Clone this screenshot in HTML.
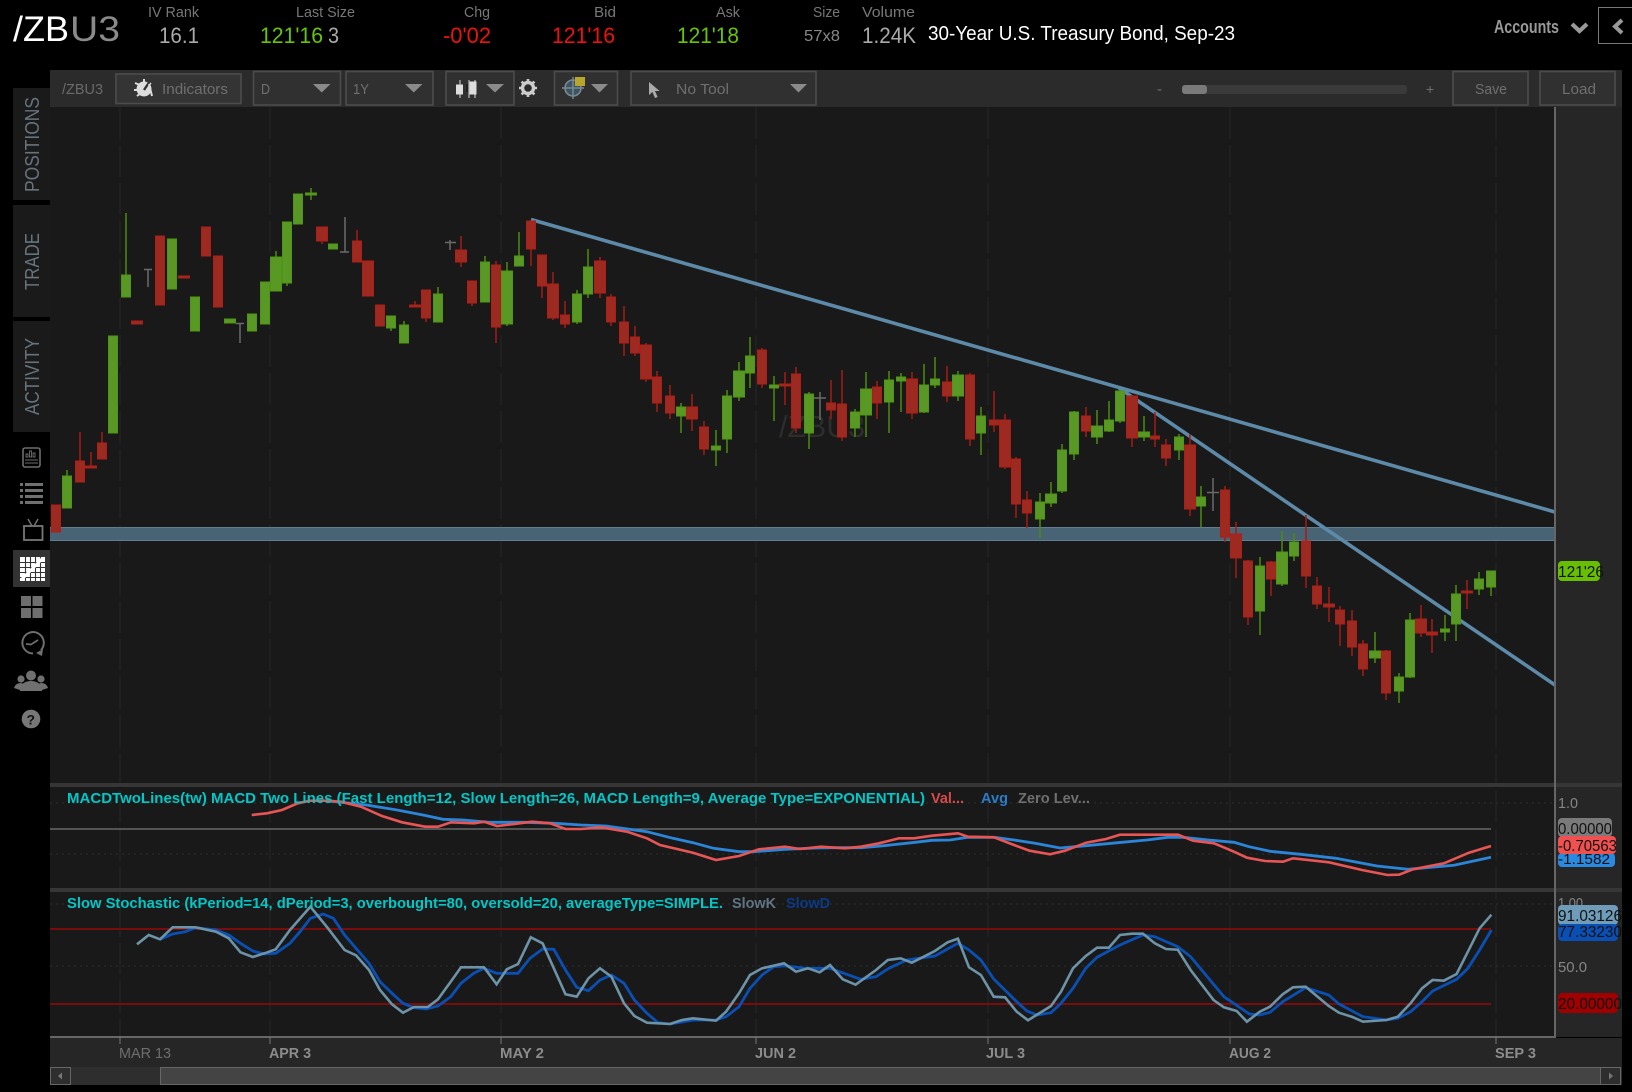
<!DOCTYPE html>
<html><head><meta charset="utf-8"><title>/ZBU3</title>
<style>html,body{margin:0;padding:0;background:#000;width:1632px;height:1092px;overflow:hidden}svg{display:block}text{font-family:"Liberation Sans",sans-serif}</style></head>
<body>
<svg width="1632" height="1092" viewBox="0 0 1632 1092" xmlns="http://www.w3.org/2000/svg">
<rect width="1632" height="1092" fill="#000"/>
<!-- header -->
<text x="13" y="41" font-size="35" fill="#fff" textLength="56" lengthAdjust="spacingAndGlyphs">/ZB</text>
<text x="70" y="41" font-size="35" fill="#8a8a8a" textLength="50" lengthAdjust="spacingAndGlyphs">U3</text>
<g font-size="15" fill="#777">
<text x="148" y="17" textLength="51" lengthAdjust="spacingAndGlyphs">IV Rank</text>
<text x="296" y="17" textLength="59" lengthAdjust="spacingAndGlyphs">Last Size</text>
<text x="464" y="17" textLength="26" lengthAdjust="spacingAndGlyphs">Chg</text>
<text x="594" y="17" textLength="22" lengthAdjust="spacingAndGlyphs">Bid</text>
<text x="716" y="17" textLength="24" lengthAdjust="spacingAndGlyphs">Ask</text>
<text x="813" y="17" textLength="27" lengthAdjust="spacingAndGlyphs">Size</text>
<text x="862" y="17" textLength="53" lengthAdjust="spacingAndGlyphs">Volume</text>
</g>
<g font-size="22">
<text x="159" y="43" fill="#aaa" textLength="40" lengthAdjust="spacingAndGlyphs">16.1</text>
<text x="260" y="43" fill="#68c400" textLength="63" lengthAdjust="spacingAndGlyphs">121'16</text>
<text x="328" y="43" fill="#aaa" textLength="11" lengthAdjust="spacingAndGlyphs">3</text>
<text x="443" y="43" fill="#f01010" textLength="48" lengthAdjust="spacingAndGlyphs">-0'02</text>
<text x="552" y="43" fill="#f01010" textLength="63" lengthAdjust="spacingAndGlyphs">121'16</text>
<text x="677" y="43" fill="#68c400" textLength="62" lengthAdjust="spacingAndGlyphs">121'18</text>
<text x="862" y="43" fill="#aaa" textLength="54" lengthAdjust="spacingAndGlyphs">1.24K</text>
</g>
<text x="804" y="41" font-size="16" fill="#888" textLength="36" lengthAdjust="spacingAndGlyphs">57x8</text>
<text x="928" y="40" font-size="20" fill="#fff" textLength="307" lengthAdjust="spacingAndGlyphs">30-Year U.S. Treasury Bond, Sep-23</text>
<text x="1494" y="33" font-size="18" font-weight="bold" fill="#999" textLength="65" lengthAdjust="spacingAndGlyphs">Accounts</text>
<path d="M1572 24L1579.5 31L1587 24" fill="none" stroke="#999" stroke-width="4.200"/>
<rect x="1598.5" y="7.5" width="40" height="36" fill="#000" stroke="#777"/>
<path d="M1622 20L1615 26.5L1622 33" fill="none" stroke="#999" stroke-width="4"/>

<!-- toolbar -->
<rect x="50" y="70" width="1572" height="37" fill="#2b2b2b"/>
<text x="62" y="94" font-size="15" fill="#6a6a6a" textLength="41" lengthAdjust="spacingAndGlyphs">/ZBU3</text>
<g fill="#303030" stroke="#4c4c4c" stroke-width="1.6">
<rect x="116" y="74" width="125" height="29.5" fill="#343434"/>
<rect x="253.5" y="71.5" width="87" height="33.5"/>
<rect x="346" y="71.5" width="87" height="33.5"/>
<rect x="446" y="71.5" width="68" height="33.5"/>
<rect x="554.5" y="71.5" width="63" height="33.5"/>
<rect x="631" y="71.5" width="185" height="33.5"/>
<rect x="1453" y="71.5" width="75" height="33.5"/>
<rect x="1540" y="71.5" width="75" height="33.5"/>
</g>
<g font-size="15" fill="#6f6f6f">
<text x="162" y="94" textLength="66" lengthAdjust="spacingAndGlyphs">Indicators</text>
<text x="261" y="94" textLength="9" lengthAdjust="spacingAndGlyphs">D</text>
<text x="353" y="94" textLength="16" lengthAdjust="spacingAndGlyphs">1Y</text>
<text x="676" y="94" textLength="53" lengthAdjust="spacingAndGlyphs">No Tool</text>
<text x="1475" y="94" textLength="32" lengthAdjust="spacingAndGlyphs">Save</text>
<text x="1562" y="94" textLength="34" lengthAdjust="spacingAndGlyphs">Load</text>
<text x="1157" y="94">-</text>
<text x="1426" y="94" font-size="14">+</text>
</g>
<g fill="#8a8a8a">
<path d="M313 84h17.5l-8.75 8.5z"/><path d="M405 84h17.5l-8.75 8.5z"/><path d="M486 84h18l-9 8.5z"/><path d="M591 84h17l-8.5 8.5z"/><path d="M790 84h17l-8.5 8.5z"/>
</g>
<rect x="1182" y="85" width="225" height="9" rx="3" fill="#3a3a3a"/>
<rect x="1182" y="85" width="25" height="9" rx="3" fill="#7a7a7a"/>
<!-- indicators icon -->
<circle cx="144" cy="89" r="7.5" fill="#ddd"/>
<path d="M135 83l5 2M137 96l4-3M144 79v4M151 83l-4 3M134 90h5" stroke="#ddd" stroke-width="2"/>
<path d="M144 90L150 81" stroke="#333" stroke-width="2.4"/>
<path d="M149 84l3 12" stroke="#ddd" stroke-width="2"/>
<!-- candle style icon -->
<path d="M460 80v18M469 80v18M475 80v18" stroke="#aaa" stroke-width="1.4"/>
<rect x="456" y="84.5" width="7" height="10" fill="#ddd"/><rect x="466" y="84" width="2" height="8" fill="#222"/>
<rect x="469.5" y="81.5" width="7" height="13" fill="#ddd"/>
<!-- gear -->
<circle cx="528" cy="88" r="5.5" fill="none" stroke="#ccc" stroke-width="3.4"/>
<path d="M528 79v3M528 94v3M519 88h3M534 88h3M521.6 81.6l2.2 2.2M532.2 92.2l2.2 2.2M534.4 81.6l-2.2 2.2M523.8 92.2l-2.2 2.2" stroke="#ccc" stroke-width="2.6"/>
<!-- pattern icon -->
<circle cx="573" cy="88" r="8" fill="#3d5562" stroke="#7a8a92" stroke-width="1.6"/>
<path d="M562 88h22M573 77v22" stroke="#7a8a92" stroke-width="1.4"/>
<rect x="575" y="77" width="10" height="9" fill="#b8a52a"/>
<!-- cursor -->
<path d="M649 82l0 13 3.4-3 2.6 6 2.6-1-2.6-6 4.6 0z" fill="#aaa"/>

<!-- sidebar tabs -->
<rect x="13" y="88" width="37" height="112" fill="#1a1a1a"/>
<rect x="13" y="205" width="37" height="112" fill="#1a1a1a"/>
<rect x="13" y="321" width="37" height="111" fill="#1a1a1a"/>
<g font-size="20" fill="#66727c">
<text transform="translate(39,192) rotate(-90)" textLength="95" lengthAdjust="spacingAndGlyphs">POSITIONS</text>
<text transform="translate(39,290) rotate(-90)" textLength="57" lengthAdjust="spacingAndGlyphs">TRADE</text>
<text transform="translate(39,415) rotate(-90)" textLength="77" lengthAdjust="spacingAndGlyphs">ACTIVITY</text>
</g>
<!-- sidebar icons -->
<rect x="23" y="448" width="17" height="19" rx="2" fill="none" stroke="#6d6d6d" stroke-width="1.6"/>
<path d="M26 457v-3h2v3zM29.5 457v-6h2v6zM33 457v-4h2v4z" fill="none" stroke="#6d6d6d" stroke-width=".9"/>
<path d="M25 460h13M25 463h13" stroke="#6d6d6d" stroke-width="1.1"/>
<path d="M25 484.5h18M25 490.5h18M25 496.5h18M25 502.5h18" stroke="#707070" stroke-width="3"/>
<path d="M20 484.5h3M20 490.5h3M20 496.5h3M20 502.5h3" stroke="#707070" stroke-width="3"/>
<rect x="24" y="526" width="18.5" height="14" fill="none" stroke="#777" stroke-width="1.8"/>
<path d="M32 526L28 519M34 526L38 519" stroke="#777" stroke-width="1.4"/>
<rect x="13" y="550" width="37" height="37" fill="#333"/>
<rect x="20" y="557" width="25" height="24" fill="#fff"/>
<path d="M25.500 557v24M30.500 557v24M35.500 557v24M40.500 557v24M20 562.500h25M20 567.500h25M20 572.500h25M20 577.500h25" stroke="#333" stroke-width="1.1"/>
<path d="M22 579L42 559" stroke="#fff" stroke-width="3"/>
<circle cx="42.500" cy="559" r="2" fill="#fff"/>
<g fill="#6e6e6e"><rect x="21" y="596" width="10" height="10"/><rect x="32.500" y="596" width="10" height="10"/><rect x="21" y="608" width="10" height="10"/><rect x="32.500" y="608" width="10" height="10"/></g>
<path d="M41 650A10.700 10.700 0 1 0 33 653.500" fill="none" stroke="#6e6e6e" stroke-width="2"/>
<path d="M36 653l7-4 -1 7z" fill="#6e6e6e"/>
<path d="M38 640L31 644.500L26 644" fill="none" stroke="#6e6e6e" stroke-width="1.7"/>
<g fill="#707070">
<circle cx="31" cy="675.500" r="5"/><path d="M20 691c0-7 5-10 11-10s11 3 11 10z"/>
<circle cx="21" cy="679" r="3.600"/><path d="M14 688c1-3 3-5 7-5l3 1-4 6z"/>
<circle cx="41" cy="679" r="3.600"/><path d="M48 688c-1-3-3-5-7-5l-3 1 4 6z"/>
</g>
<circle cx="31" cy="719" r="9.300" fill="#777"/>
<text x="26.500" y="724.500" font-size="14" font-weight="bold" fill="#111">?</text>

<!-- chart background -->
<rect x="50" y="107" width="1505" height="930" fill="#191919"/>
<rect x="1556" y="107" width="66" height="930" fill="#262626"/>
<rect x="50" y="1038" width="1572" height="29" fill="#262626"/>
<!-- grid -->
<path d="M120 107V1037M270 107V1037M501 107V1037M756 107V1037M988 107V1037M1230 107V1037M1496 107V1037" stroke="#262626" stroke-width="1.200" stroke-dasharray="32 6"/>
<path d="M50 803H1555M50 854H1555M50 904H1555M50 966H1555" stroke="#2e2e2e" stroke-width="1" stroke-dasharray="2 4"/>
<!-- watermark -->
<text x="779" y="437" font-size="31" fill="#2d2d2d" textLength="86" lengthAdjust="spacingAndGlyphs">/ZBU3</text>
<!-- horizontal band -->
<rect x="50" y="527" width="1505" height="14" fill="#486374"/>
<path d="M50 527.500H1555M50 540.500H1555" stroke="#5f7d90" stroke-width="1"/>
<!-- trend lines -->
<path d="M531 219.500L1555 512M1119 388L1555 685" fill="none" stroke="#5c8aa8" stroke-width="3.600"/>
<!-- gray doji -->
<path d="M144 269.500h8M148 269.500V287M236 323.500h8M240 323.500V343M340 252h9M345 217V252M445 242.500h11M450 240V250M814 398h12M820 392V420M1207 492.500h12M1213 478V511" fill="none" stroke="#6a6a6a" stroke-width="1.500"/>
<!-- green wicks -->
<path fill="none" stroke="#4a8c10" stroke-width="1.500" d="M67 470V476M126 213V275M276 251V257M287 283V286M311 188V200M391 328V331M404 321V325M438 287V294M485 256V262M507 262V326M519 232V256M577 290V324M588 249V298M681 403V433M716 430V466M727 390V453M739 362V401M750 337V388M774 376V421M809 392V449M855 409V437M866 372V437M889 371V433M901 373V412M924 364V413M935 357V388M958 371V401M981 407V455M1040 493V538M1051 482V507M1062 444V493M1074 411V460M1097 410V444M1109 401V432M1120 390V423M1144 416V441M1179 434V460M1201 486V527M1260 557V635M1282 531V586M1294 533V561M1375 632V663M1399 673V703M1410 613V678M1445 615V641M1456 585V641M1479 572V595M1491 571V596"/>
<!-- red wicks -->
<path fill="none" stroke="#a51a14" stroke-width="1.500" d="M80 432V461M91 452V466M102 432V443M322 241V244M357 230V241M415 301V305M426 318V322M461 236V267M472 303V306M496 261V343M531 249V266M542 286V298M553 272V320M565 301V328M600 257V298M611 294V326M624 306V356M635 326V356M646 343V382M657 371V412M670 385V419M692 394V431M704 421V455M762 348V388M785 372V405M796 367V433M831 380V419M842 370V441M877 381V419M912 372V419M947 366V402M970 373V446M994 391V432M1005 414V469M1016 457V518M1027 491V528M1086 407V437M1132 395V447M1155 412V447M1166 439V466M1190 434V516M1225 486V542M1236 522V578M1248 560V625M1271 561V596M1306 515V588M1317 577V609M1329 587V622M1340 606V646M1352 610V656M1363 640V676M1386 650V700M1421 605V637M1432 619V653M1467 580V609"/>
<!-- green bodies -->
<path fill="#5a9826" stroke="#4f9614" stroke-width="1" d="M62.500 476h9V508h-9zM108.500 336h9V433h-9zM121.500 275h9V297h-9zM167.500 239h9V289h-9zM190.500 297h9V331h-9zM247.500 314h9V331h-9zM260.500 282h9V324h-9zM282.500 222h9V283h-9zM293.500 194h9V224h-9zM305.500 193h11V195h-11zM328.500 244h9V249h-9zM386.500 316h9V328h-9zM399.500 325h9V343h-9zM433.500 294h9V322h-9zM480.500 262h9V302h-9zM514.500 256h9V266h-9zM572.500 294h9V322h-9zM583.500 267h9V294h-9zM676.500 407h9V416h-9zM711.500 446h9V450h-9zM722.500 396h9V439h-9zM745.500 356h9V373h-9zM769.500 385h9V388h-9zM804.500 394h9V433h-9zM850.500 412h9V428h-9zM884.500 380h9V402h-9zM896.500 377h9V381h-9zM919.500 385h9V412h-9zM930.500 379h9V385h-9zM976.500 416h9V433h-9zM1035.500 502h9V519h-9zM1057.500 450h9V491h-9zM1069.500 412h9V454h-9zM1104.500 420h9V431h-9zM1115.500 391h9V421h-9zM1174.500 437h9V450h-9zM1196.500 497h9V506h-9zM1255.500 566h9V611h-9zM1289.500 542h9V556h-9zM1394.500 677h9V691h-9zM1405.500 620h9V677h-9zM1440.500 629h9V632h-9zM1451.500 594h9V624h-9zM1474.500 579h9V589h-9zM1486.500 571h9V587h-9zM224.500 319h11V323h-11zM270.500 257h11V291h-11zM501.500 271h11V324h-11zM733.500 371h11V397h-11zM860.500 389h11V415h-11zM952.500 375h11V396h-11zM1045.500 494h11V503h-11zM1091.500 426h11V437h-11zM1138.500 432h11V437h-11zM1276.500 552h11V584h-11zM1369.500 651h11V658h-11z"/>
<!-- red bodies -->
<path fill="#9c2a20" stroke="#ae1e16" stroke-width="1" d="M51.500 505h9V532h-9zM75.500 461h9V482h-9zM97.500 443h9V459h-9zM155.500 236h9V305h-9zM201.500 227h9V256h-9zM213.500 256h9V307h-9zM352.500 241h9V262h-9zM375.500 305h9V326h-9zM421.500 290h9V318h-9zM467.500 281h9V303h-9zM491.500 265h9V327h-9zM526.500 221h9V249h-9zM537.500 255h9V286h-9zM560.500 315h9V324h-9zM606.500 297h9V322h-9zM619.500 322h9V343h-9zM630.500 337h9V353h-9zM652.500 377h9V403h-9zM665.500 396h9V413h-9zM699.500 427h9V449h-9zM757.500 350h9V384h-9zM791.500 374h9V428h-9zM826.500 403h9V410h-9zM837.500 404h9V437h-9zM872.500 387h9V403h-9zM942.500 382h9V396h-9zM965.500 375h9V439h-9zM989.500 420h9V425h-9zM1011.500 459h9V504h-9zM1022.500 500h9V513h-9zM1081.500 416h9V431h-9zM1150.500 436h9V439h-9zM1161.500 445h9V458h-9zM1220.500 490h9V537h-9zM1243.500 561h9V617h-9zM1266.500 562h9V579h-9zM1301.500 541h9V576h-9zM1312.500 586h9V604h-9zM1335.500 610h9V624h-9zM1347.500 621h9V647h-9zM1358.500 644h9V669h-9zM1381.500 651h9V693h-9zM85.500 466h11V468h-11zM131.500 321h11V324h-11zM178.500 276h11V278h-11zM316.500 227h11V241h-11zM362.500 261h11V296h-11zM409.500 305h11V307h-11zM455.500 250h11V262h-11zM547.500 284h11V318h-11zM594.500 261h11V293h-11zM640.500 345h11V379h-11zM686.500 407h11V419h-11zM779.500 384h11V386h-11zM906.500 379h11V413h-11zM999.500 420h11V467h-11zM1126.500 396h11V438h-11zM1184.500 445h11V509h-11zM1230.500 534h11V558h-11zM1323.500 604h11V607h-11zM1415.500 619h11V633h-11zM1426.500 632h11V635h-11zM1461.500 591h11V593h-11z"/>

<!-- pane separators -->
<rect x="50" y="783" width="1572" height="4" fill="#363636"/>
<rect x="50" y="888" width="1572" height="4" fill="#363636"/>

<!-- MACD -->
<path d="M50 829H1491" stroke="#777" stroke-width="1.200"/>
<polyline fill="none" stroke="#2b85d8" stroke-width="2.800" points="326,800.700 366.500,805 397,810 423,815 443,819.300 463.500,820 489,822.300 525,822.300 555,823.300 581,825 606,826 647,831.700 673,838.300 693,842.700 713.500,848.300 739,851.700 754,851.700 785,849.300 816,848 830,847.700 861,847.700 881,846 912,842.700 932,840.300 950,840 968,837.300 994,837.300 1014,840 1035,843.300 1060,848 1086,845.700 1122,842.300 1147,840 1168,837.300 1183,837.300 1208.500,840 1234,842.300 1249,846.700 1270,851.300 1301,854.300 1336,858.300 1377,866 1408,869.300 1454,865.300 1491,857.300"/>
<polyline fill="none" stroke="#e85555" stroke-width="2.600" points="251.700,815 267,813.300 282,810 297.700,803.300 310,800.700 326,800.700 341,801.700 361,806.700 382,816 402,822.300 425,826.700 438,826.700 451,822.300 474,823.300 484,821.700 497,826 514.500,824 532,821.700 550,823.300 565.500,829 581,829 601,827.300 627,831.700 647,838.300 660,845 693,852.700 716,860 739,856 759,849.300 785,846.700 800,849 821,846.700 845,848.300 861,846.700 879,843.300 899,838.300 914,838.300 932,835.700 958,833.300 968,836.700 994,837.300 1014,845 1029.500,850.700 1050,854.300 1065,850.700 1086,842.700 1106,839 1120,834.700 1178,834.700 1193,840.700 1214,843.300 1234,851.700 1247,857.700 1265,861 1283,861.700 1293,858.300 1329,862.300 1362,870 1387.500,875 1399,874.700 1413,869.300 1444,863.300 1469,852.700 1491,846"/>
<text x="67" y="803" font-size="15" font-weight="bold" fill="#00c8c8" textLength="858" lengthAdjust="spacingAndGlyphs">MACDTwoLines(tw) MACD Two Lines (Fast Length=12, Slow Length=26, MACD Length=9, Average Type=EXPONENTIAL)</text>
<text x="931" y="803" font-size="15" font-weight="bold" fill="#d84a4a" textLength="33" lengthAdjust="spacingAndGlyphs">Val...</text>
<text x="981" y="803" font-size="15" font-weight="bold" fill="#2a7cc8" textLength="27" lengthAdjust="spacingAndGlyphs">Avg</text>
<text x="1018" y="803" font-size="15" font-weight="bold" fill="#6f6f6f" textLength="72" lengthAdjust="spacingAndGlyphs">Zero Lev...</text>

<!-- Stochastic -->
<path d="M50 929H1491M50 1004H1491" stroke="#7a0c0c" stroke-width="2"/>
<polyline fill="none" stroke="#0a50b4" stroke-width="2.800" points="160,939.300 172.700,934 185.400,931.700 195.600,927.700 216,930 228.800,935 240.500,943.300 252.800,951 264.500,954 275.700,953.300 290,943.300 300,931.700 310.400,918.300 323,914 333.400,918.300 344.600,935 356,948.300 369,963.300 380,981.700 392,993.300 403,1003.300 414,1007.700 426,1009 438,1006 450.700,996.700 461,983.300 473.700,973.300 484,968.300 496.600,973.300 518,973.300 530,958.300 542.600,949 553.800,949.300 565.500,970 576.700,987.300 588.500,990.700 600,980 611.400,975 624,983.300 634.400,1000 647,1013.300 658,1022.700 670,1024 693,1020 716,1020 726,1016.700 739,1006.700 750,988.300 762,975 773.700,966.700 784,965.700 805,968.300 830,968.300 860.700,979.300 876,976.700 888.800,968.300 906.700,960 934.900,956 957.900,943.300 969,950 980.900,960 993.700,979 1016.700,1001.700 1027,1011 1037,1015 1051,1012.700 1061,1003.300 1073,988.300 1085.800,968.300 1097,957.300 1120,945 1143,935 1154.800,936.700 1177.800,946.700 1190.600,956.700 1223.900,996.700 1249.400,1014 1259.700,1015 1270,1012.300 1282.700,1001.700 1305.700,987.700 1328.700,995 1339,1004 1363,1016.700 1386.500,1020 1397.800,1018.300 1410.600,1011.700 1422,1001.700 1432.600,991 1456.600,979.300 1467.900,968.300 1479.600,950 1491.400,930"/>
<polyline fill="none" stroke="#6d93a8" stroke-width="2.600" points="137,944.300 148.700,935 160,939.300 172.700,927.300 195.600,927.300 216,931.700 228.800,938.300 240.500,952.300 252.800,957 264.500,953.300 275.700,949.300 290,930 310.400,906.700 328,928.300 344.600,950 356,955.300 369,970 380,990 392,1004.300 403,1012.700 414,1007 427.800,1007 438,999.300 450.700,981.700 461,967.300 484,967.300 496.600,984.300 506.800,969.300 518,964 530.800,937.300 542.600,943.300 565.500,994.300 576.700,996.700 588.500,978.300 600,968.300 611.400,976.700 624,1003.300 634.400,1016 647,1022.700 670,1024 682,1020 693,1018.300 716,1020.700 726,1011.700 739,993.300 750,975 762,968.300 784,963.300 796,971.700 808,968.300 819.600,972.300 830,965 842.800,979.300 855.600,984.700 876,970 887.800,960 900.600,958.300 911.800,962.700 934.900,951 947.600,942.300 957.900,938.700 969,967.300 980.900,975 993.700,996.700 1005,997.300 1016.700,1011.700 1028,1020.300 1051,1006 1061,991.700 1073,968.300 1085.800,956 1097,947.700 1108.800,947.700 1120,935 1131.800,933.700 1143,933.700 1154.800,943.300 1166,949 1177.800,949.700 1190.600,970 1213.600,1000 1223.900,1007.300 1236.700,1011 1246.900,1021.700 1259.700,1011.700 1270,1006.700 1282.700,994.300 1293,987.300 1305.700,986.700 1328.700,1006 1339,1012.700 1351.700,1016.700 1363,1021.700 1386.500,1020 1397.800,1016.700 1410.600,1003.300 1422,988.300 1432.600,980 1443.800,980.700 1456.600,974 1467.900,951.700 1479.600,928.300 1491.400,914.700"/>
<text x="67" y="908" font-size="15" font-weight="bold" fill="#00c8c8" textLength="656" lengthAdjust="spacingAndGlyphs">Slow Stochastic (kPeriod=14, dPeriod=3, overbought=80, oversold=20, averageType=SIMPLE.</text>
<text x="732" y="908" font-size="15" font-weight="bold" fill="#5f7583" textLength="44" lengthAdjust="spacingAndGlyphs">SlowK</text>
<text x="786" y="908" font-size="15" font-weight="bold" fill="#0a3a88" textLength="44" lengthAdjust="spacingAndGlyphs">SlowD</text>

<!-- axes -->
<rect x="1554" y="107" width="2" height="931" fill="#666"/>
<rect x="50" y="1036" width="1506" height="2" fill="#666"/>
<path d="M120 1037v7M270 1037v7M501 1037v7M756 1037v7M988 1037v7M1230 1037v7M1496 1037v7" stroke="#777" stroke-width="1"/>
<g font-size="15" fill="#8c8c8c" font-weight="bold">
<text x="119" y="1058" font-weight="normal" fill="#6e6e6e" textLength="52" lengthAdjust="spacingAndGlyphs">MAR 13</text>
<text x="269" y="1058" textLength="42" lengthAdjust="spacingAndGlyphs">APR 3</text>
<text x="500" y="1058" textLength="44" lengthAdjust="spacingAndGlyphs">MAY 2</text>
<text x="755" y="1058" textLength="41" lengthAdjust="spacingAndGlyphs">JUN 2</text>
<text x="986" y="1058" textLength="39" lengthAdjust="spacingAndGlyphs">JUL 3</text>
<text x="1229" y="1058" textLength="42" lengthAdjust="spacingAndGlyphs">AUG 2</text>
<text x="1495" y="1058" textLength="41" lengthAdjust="spacingAndGlyphs">SEP 3</text>
</g>
<!-- right axis labels -->
<text x="1558" y="808" font-size="15" fill="#858585" textLength="20" lengthAdjust="spacingAndGlyphs">1.0</text>
<text x="1558" y="908" font-size="15" fill="#858585" textLength="25" lengthAdjust="spacingAndGlyphs">1.00</text>
<text x="1558" y="972" font-size="15" fill="#858585" textLength="29" lengthAdjust="spacingAndGlyphs">50.0</text>
<rect x="1558" y="561" width="42" height="20" rx="4" fill="#68be00"/>
<text x="1558" y="577" font-size="16" fill="#111" textLength="46" lengthAdjust="spacingAndGlyphs">121'26</text>
<rect x="1558" y="818" width="54" height="19" rx="4" fill="#7a7a7a"/>
<text x="1558" y="834" font-size="16" fill="#111" textLength="54" lengthAdjust="spacingAndGlyphs">0.00000</text>
<rect x="1558" y="853" width="57" height="14" rx="4" fill="#2a8ae0"/>
<text x="1558" y="864" font-size="15" fill="#111" textLength="52" lengthAdjust="spacingAndGlyphs">-1.1582</text>
<rect x="1558" y="836" width="58" height="18" rx="4" fill="#f05050"/>
<text x="1558" y="851" font-size="16" fill="#111" textLength="59" lengthAdjust="spacingAndGlyphs">-0.70563</text>
<rect x="1558" y="905" width="60" height="20" rx="4" fill="#6f9cb8"/>
<text x="1558" y="921" font-size="16" fill="#111" textLength="64" lengthAdjust="spacingAndGlyphs">91.03126</text>
<rect x="1558" y="924" width="60" height="17" rx="4" fill="#0a50b4"/>
<text x="1558" y="937" font-size="16" fill="#111" textLength="64" lengthAdjust="spacingAndGlyphs">77.33230</text>
<rect x="1558" y="993" width="60" height="20" rx="4" fill="#a00000"/>
<text x="1558" y="1009" font-size="16" fill="#111" textLength="64" lengthAdjust="spacingAndGlyphs">20.00000</text>

<!-- scrollbar -->
<rect x="50" y="1067" width="1572" height="18" fill="#2e2e2e"/>
<rect x="50.500" y="1067.500" width="20" height="17" fill="#2e2e2e" stroke="#666"/>
<path d="M62 1072.500v7l-4-3.500z" fill="#777"/>
<rect x="160.500" y="1067.500" width="1440" height="17" fill="#444" stroke="#666"/>
<rect x="1600.500" y="1067.500" width="20" height="17" fill="#2e2e2e" stroke="#666"/>
<path d="M1609 1072.500v7l4-3.500z" fill="#777"/>

<!-- right black edge -->
<rect x="1622" y="47" width="10" height="1045" fill="#000"/>
</svg>
</body></html>
